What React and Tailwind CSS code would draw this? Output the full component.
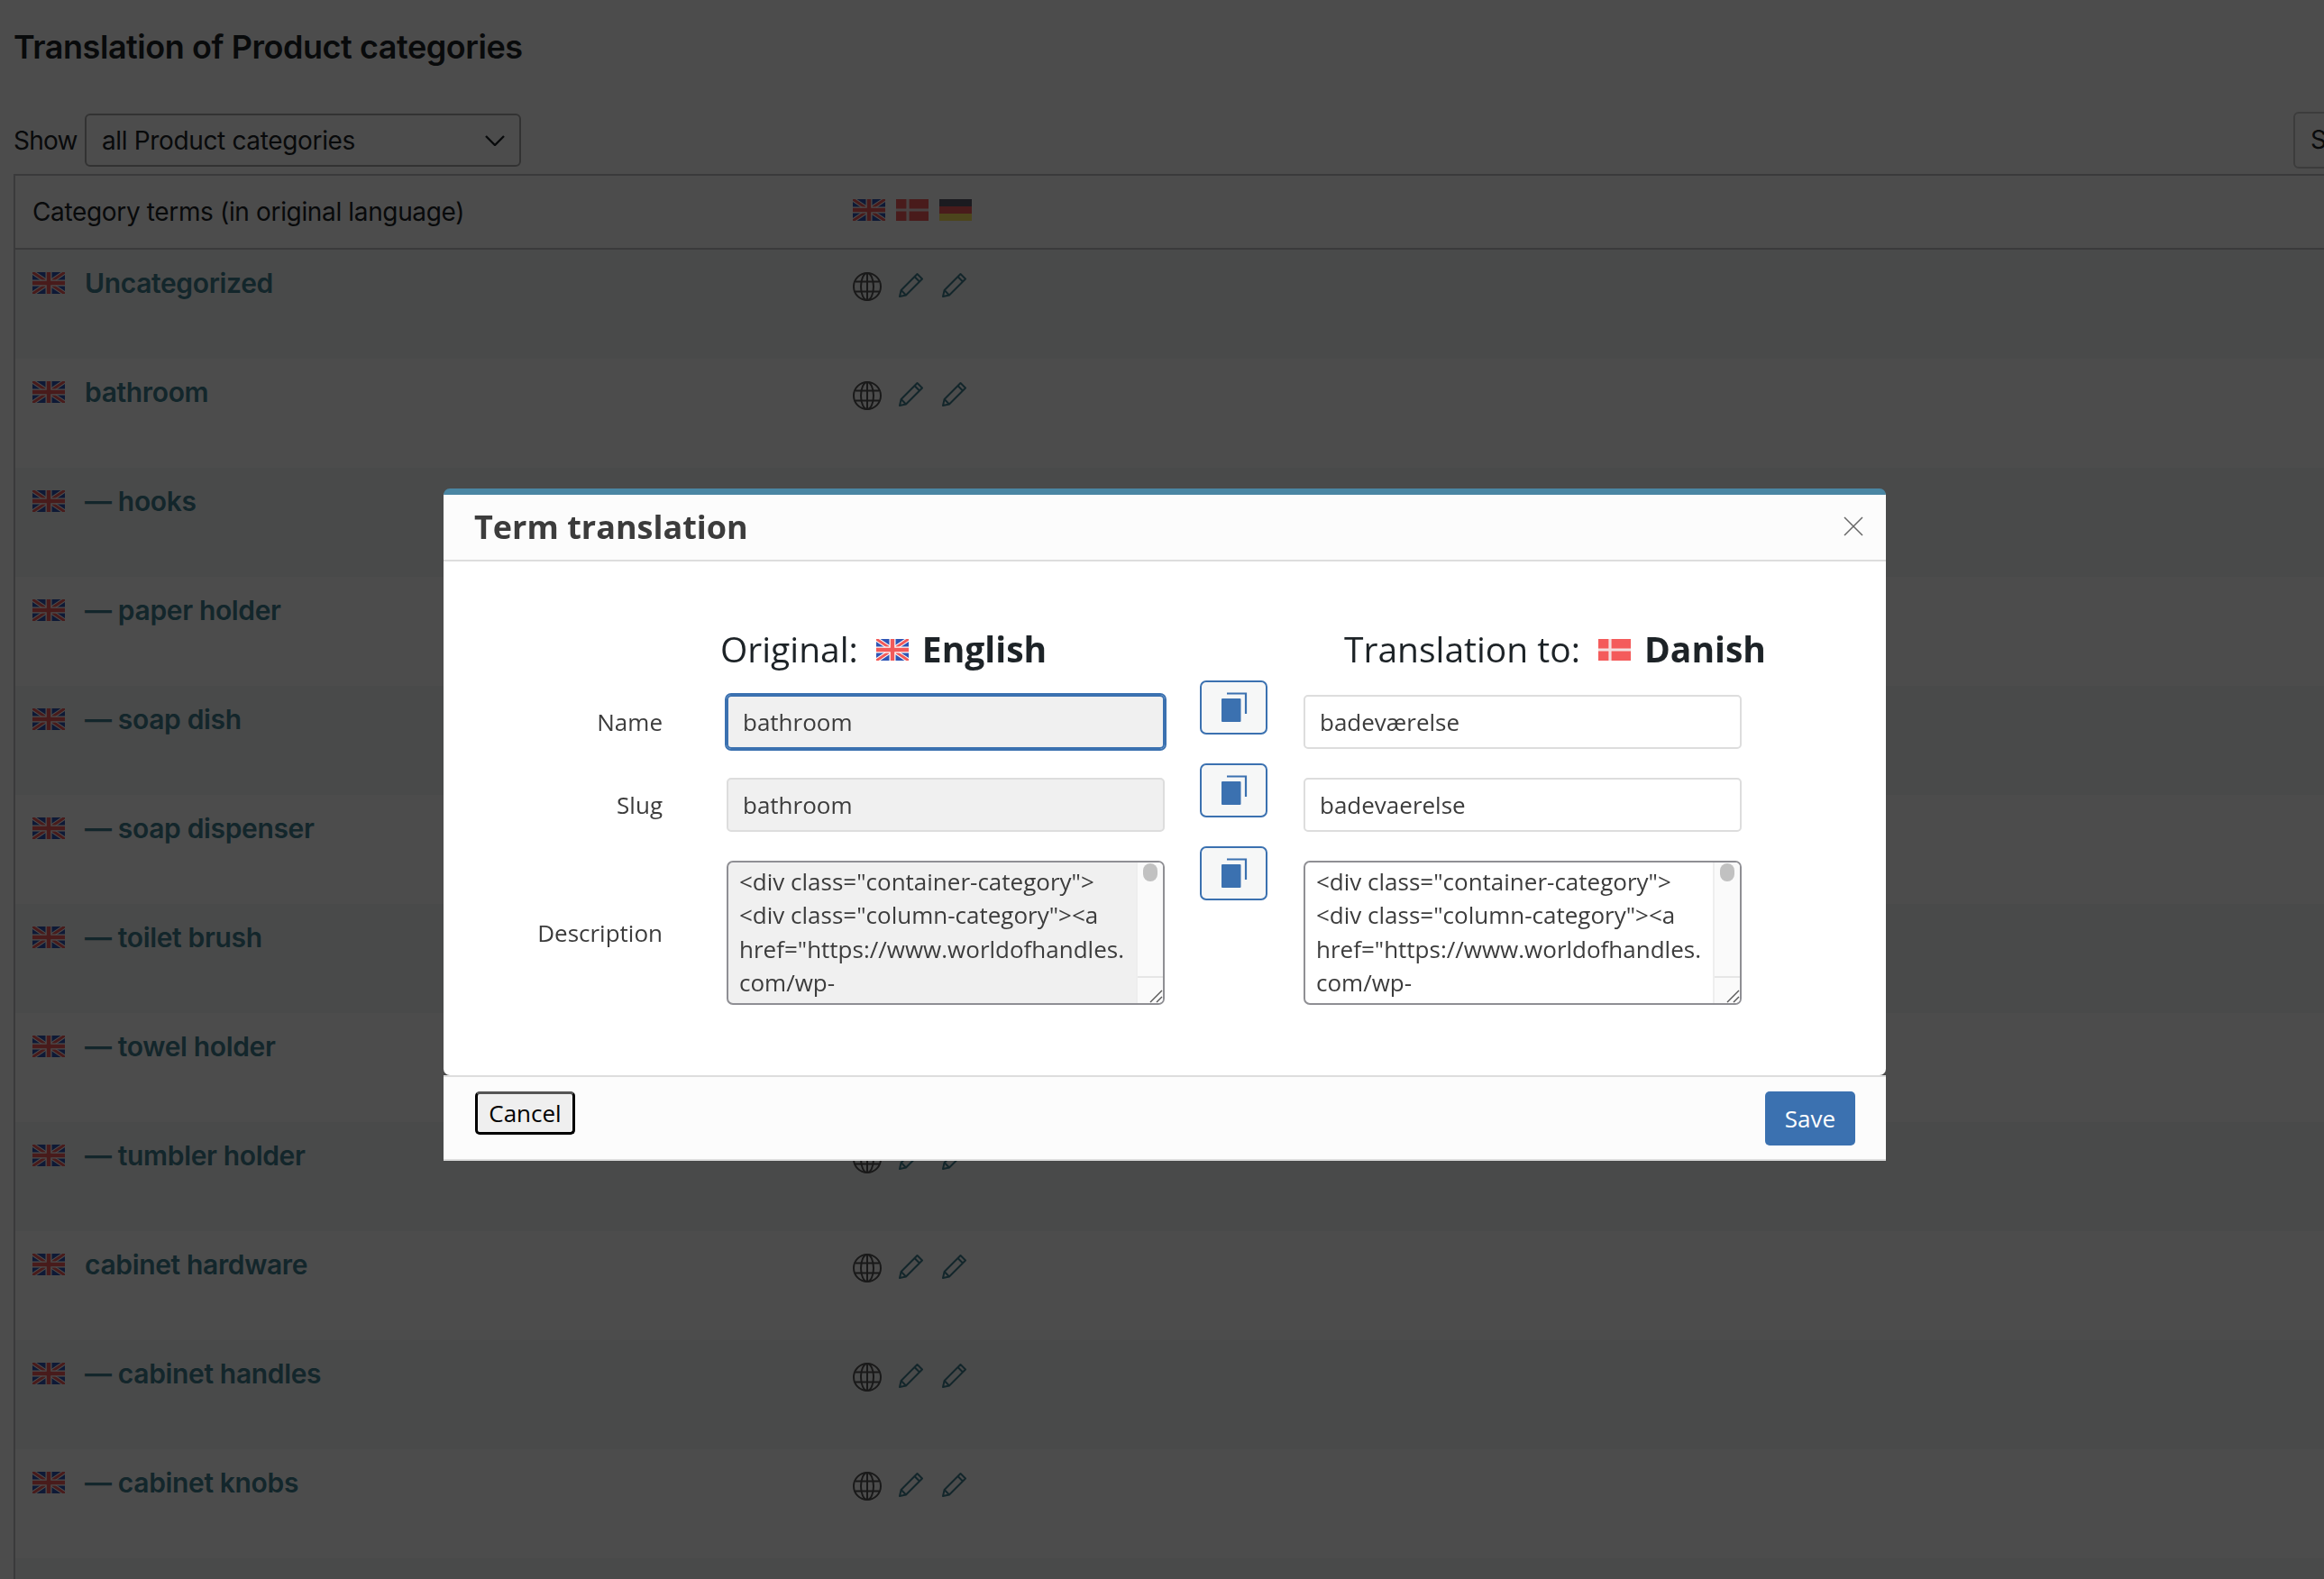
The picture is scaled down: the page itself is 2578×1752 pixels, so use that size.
import React from "react";

const ROWS = ["Uncategorized","bathroom","— hooks","— paper holder","— soap dish","— soap dispenser","— toilet brush","— towel holder","— tumbler holder","cabinet hardware","— cabinet handles","— cabinet knobs"];

function FlagUK({ className }) {
  return (
    <svg viewBox="0 0 36 24" className={className}>
      <rect width="36" height="24" fill="#2f55b5" />
      <path d="M0 0L36 24M36 0L0 24" stroke="#fff" strokeWidth="5" />
      <path d="M0 0L36 24M36 0L0 24" stroke="#f25a5a" strokeWidth="3" />
      <path d="M18 0V24M0 12H36" stroke="#fff" strokeWidth="7" />
      <path d="M18 0V24M0 12H36" stroke="#f25a5a" strokeWidth="4.5" />
    </svg>
  );
}
function FlagDK({ className }) {
  return (
    <svg viewBox="0 0 36 24" className={className}>
      <rect width="36" height="24" fill="#f45b5b" />
      <path d="M13 0V24M0 12H36" stroke="#f3e0e0" strokeWidth="3.2" />
    </svg>
  );
}
function FlagDE({ className }) {
  return (
    <svg viewBox="0 0 36 24" className={className}>
      <rect width="36" height="8" fill="#5a5a6c" />
      <rect y="8" width="36" height="8" fill="#f45b5b" />
      <rect y="16" width="36" height="8" fill="#ffe660" />
    </svg>
  );
}
function Globe() {
  return (
    <svg viewBox="0 0 32 32" className="w-8 h-8" fill="none" stroke="#555555" strokeWidth="2">
      <circle cx="16" cy="16" r="15" />
      <ellipse cx="16" cy="16" rx="7" ry="15" />
      <path d="M16 1V31M3 10.5H29M3 21.5H29" />
    </svg>
  );
}
function Pencil() {
  return (
    <svg viewBox="0 0 28 28" className="w-7 h-7" fill="none" stroke="#42808f" strokeWidth="2" strokeLinejoin="round">
      <path d="M1 27L2.6 20L20.5 2L26 7.5L8 25.5Z" />
      <path d="M17.5 5L23 10.5M2.6 20L8 25.5" />
    </svg>
  );
}
function CopyBtn() {
  return (
    <button className="w-[75px] h-[60px] shrink-0 flex items-center justify-center rounded-[7px] border-2 border-[#3b71b0] bg-[#f6f7f7]">
      <svg viewBox="0 0 30 34" className="w-[30px] h-[34px]">
        <path d="M7 1.5H28V24" fill="none" stroke="#3b71b0" strokeWidth="2.2" />
        <rect x="1" y="7" width="21.5" height="26" rx="1" fill="#3b71b0" />
      </svg>
    </button>
  );
}
function Area({ bg }) {
  return (
    <div className={`h-[160px] rounded-[7px] border-2 border-[#8f8f94] flex overflow-hidden ${bg}`}>
      <div className="flex-1 pl-3 pt-[3px] text-[26px] leading-[37.4px] text-[#3c3c3c] whitespace-nowrap">
        <div>&lt;div class="container-category"&gt;</div>
        <div>&lt;div class="column-category"&gt;&lt;a</div>
        <div>href="https://www.worldofhandles.</div>
        <div>com/wp-</div>
      </div>
      <div className="w-[30px] shrink-0 flex flex-col bg-[#fafafa] border-l-2 border-[#eeeeee]">
        <div className="flex-1 pt-[1px] flex justify-center">
          <div className="w-4 h-5 rounded-full bg-[#c1c1c1]"></div>
        </div>
        <div className="h-[30px] bg-[#fafafa] border-t-2 border-[#e6e6e6] flex items-end justify-end">
          <svg viewBox="0 0 16 16" className="w-4 h-4" stroke="#555" strokeWidth="1.4">
            <path d="M2 15L15 2M9 15L15 9" />
          </svg>
        </div>
      </div>
    </div>
  );
}
function Label({ children, center }) {
  return <div className={`w-[243px] shrink-0 text-right text-[26px] text-[#3c3c3c] ${center ? "h-[160px] leading-[160px]" : "h-[60px] leading-[60px]"}`}>{children}</div>;
}
function TextInput({ value, cls }) {
  return (
    <div className={`h-[60px] rounded-[5px] border-2 px-4 text-[26px] leading-[56px] text-[#3c3c3c] ${cls}`}>{value}</div>
  );
}
function FormRow({ label, left, right, center }) {
  return (
    <div className="flex items-start h-[92px]">
      <div className="pt-4"><Label center={center}>{label}</Label></div>
      <div className="w-[486px] ml-[71px] shrink-0 pt-4">{left}</div>
      <div className="ml-[39px]"><CopyBtn /></div>
      <div className="w-[486px] ml-[40px] shrink-0 pt-4">{right}</div>
    </div>
  );
}

export default function App() {
  return (
    <div className="relative w-[2578px] h-[1752px] overflow-hidden bg-white text-[#1d2327] font-['Inter',sans-serif]">
      <div className="pl-[15px] pt-[27px]">
        <h1 className="text-[36px] leading-[50px] font-semibold tracking-[-0.45px] text-[#1d2327]">Translation of Product categories</h1>
        <div className="flex items-center mt-[47px] h-[63px] tracking-[-0.35px]">
          <span className="text-[28px] w-[79px] tracking-[-0.8px]">Show</span>
          <div className="w-[484px] h-[59px] rounded-[6px] border-2 border-[#a8a8a8] flex items-center justify-between pl-[17px] pr-[16px] text-[28px]">
            <span>all Product categories</span>
            <svg viewBox="0 0 22 12" className="w-[22px] h-3" fill="none" stroke="#1d2327" strokeWidth="2.4"><path d="M1 1L11 11L21 1" /></svg>
          </div>
          <div className="ml-auto w-[120px] h-[63px] shrink-0 -mr-[86px] rounded-[6px] border-2 border-[#c9c9c9] pl-[17px] text-[28px] leading-[59px]">Search</div>
        </div>
        <div className="mt-[6px] -mr-10 border-2 border-r-0 border-b-0 border-[#c3c4c7]">
          <div className="flex h-[82px] border-b-2 border-[#c3c4c7] items-center pl-[19px]">
            <div className="w-[910px] shrink-0 text-[28px] tracking-[-0.35px]">Category terms (in original language)</div>
            <div className="flex gap-3 -mt-[5px]">
              <FlagUK className="w-9 h-6" /><FlagDK className="w-9 h-6" /><FlagDE className="w-9 h-6" />
            </div>
          </div>
          {ROWS.map((name, i) => (
            <div key={name} className={`flex h-[121px] pl-[19px] ${i % 2 === 0 ? "bg-[#f6f7f7]" : "bg-white"}`}>
              <div className="w-[910px] shrink-0 flex items-start pt-[25px]">
                <FlagUK className="w-9 h-6" />
                <a className="ml-[22px] text-[30px] leading-[24px] font-semibold tracking-[-0.35px] text-[#42808f]">{name}</a>
              </div>
              <div className="flex items-start pt-[25px]">
                <Globe />
                <div className="ml-[19px]"><Pencil /></div>
                <div className="ml-5"><Pencil /></div>
              </div>
            </div>
          ))}
          <div className="h-[60px] bg-[#f6f7f7]"></div>
        </div>
      </div>

      <div className="fixed inset-0 bg-black/70"></div>

      <div className="absolute left-[492px] top-[542px] w-[1600px] font-['Open_Sans',sans-serif]">
        <div className="h-[81px] rounded-t-[7px] border-t-[7px] border-[#4a86a3] border-b-2 border-b-[#dddddd] bg-[#fcfcfc] flex items-center justify-between pl-[34px] pr-[25px]">
          <div className="text-[36px] font-bold text-[#3c3c3c]">Term translation</div>
          <svg viewBox="0 0 22 22" className="w-[22px] h-[22px] -mt-[2px]" stroke="#666" strokeWidth="1.5"><path d="M1 1L21 21M21 1L1 21" /></svg>
        </div>
        <div className="h-[570px] bg-white rounded-b-[7px] pt-[68px]">
          <div className="flex items-center h-[64px] pb-[5px]">
            <div className="ml-[307px] flex items-center w-[692px] text-[39px] text-[#1d2327]">
              <span>Original:</span>
              <FlagUK className="w-9 h-6 ml-[20px]" />
              <span className="ml-[15px] font-bold">English</span>
            </div>
            <div className="flex items-center text-[39px] text-[#1d2327]">
              <span>Translation to:</span>
              <FlagDK className="w-9 h-6 ml-[20px]" />
              <span className="ml-[15px] font-bold">Danish</span>
            </div>
          </div>
          <FormRow label="Name"
            left={<TextInput value="bathroom" cls="bg-[#f0f0f0] border-[#3b71b0] outline-2 outline-[#3b71b0]" />}
            right={<TextInput value="badeværelse" cls="border-[#dddddd] bg-white" />} />
          <FormRow label="Slug"
            left={<TextInput value="bathroom" cls="bg-[#f0f0f0] border-[#dddddd]" />}
            right={<TextInput value="badevaerelse" cls="border-[#dddddd] bg-white" />} />
          <FormRow label="Description" center left={<Area bg="bg-[#f0f0f0]" />} right={<Area bg="bg-white" />} />
        </div>
        <div className="h-[95px] bg-[#fcfcfc] border-y-2 border-[#dddddd] flex items-start justify-between pl-[35px] pr-[34px] pt-[16px]">
          <button className="w-[111px] h-[48px] rounded-[5px] bg-[#efefef] border-[3px] border-black border-t-[#555] text-[26px] leading-none text-black">Cancel</button>
          <button className="w-[100px] h-[60px] rounded-[5px] bg-[#3b71b0] text-[26px] text-white">Save</button>
        </div>
      </div>
    </div>
  );
}
